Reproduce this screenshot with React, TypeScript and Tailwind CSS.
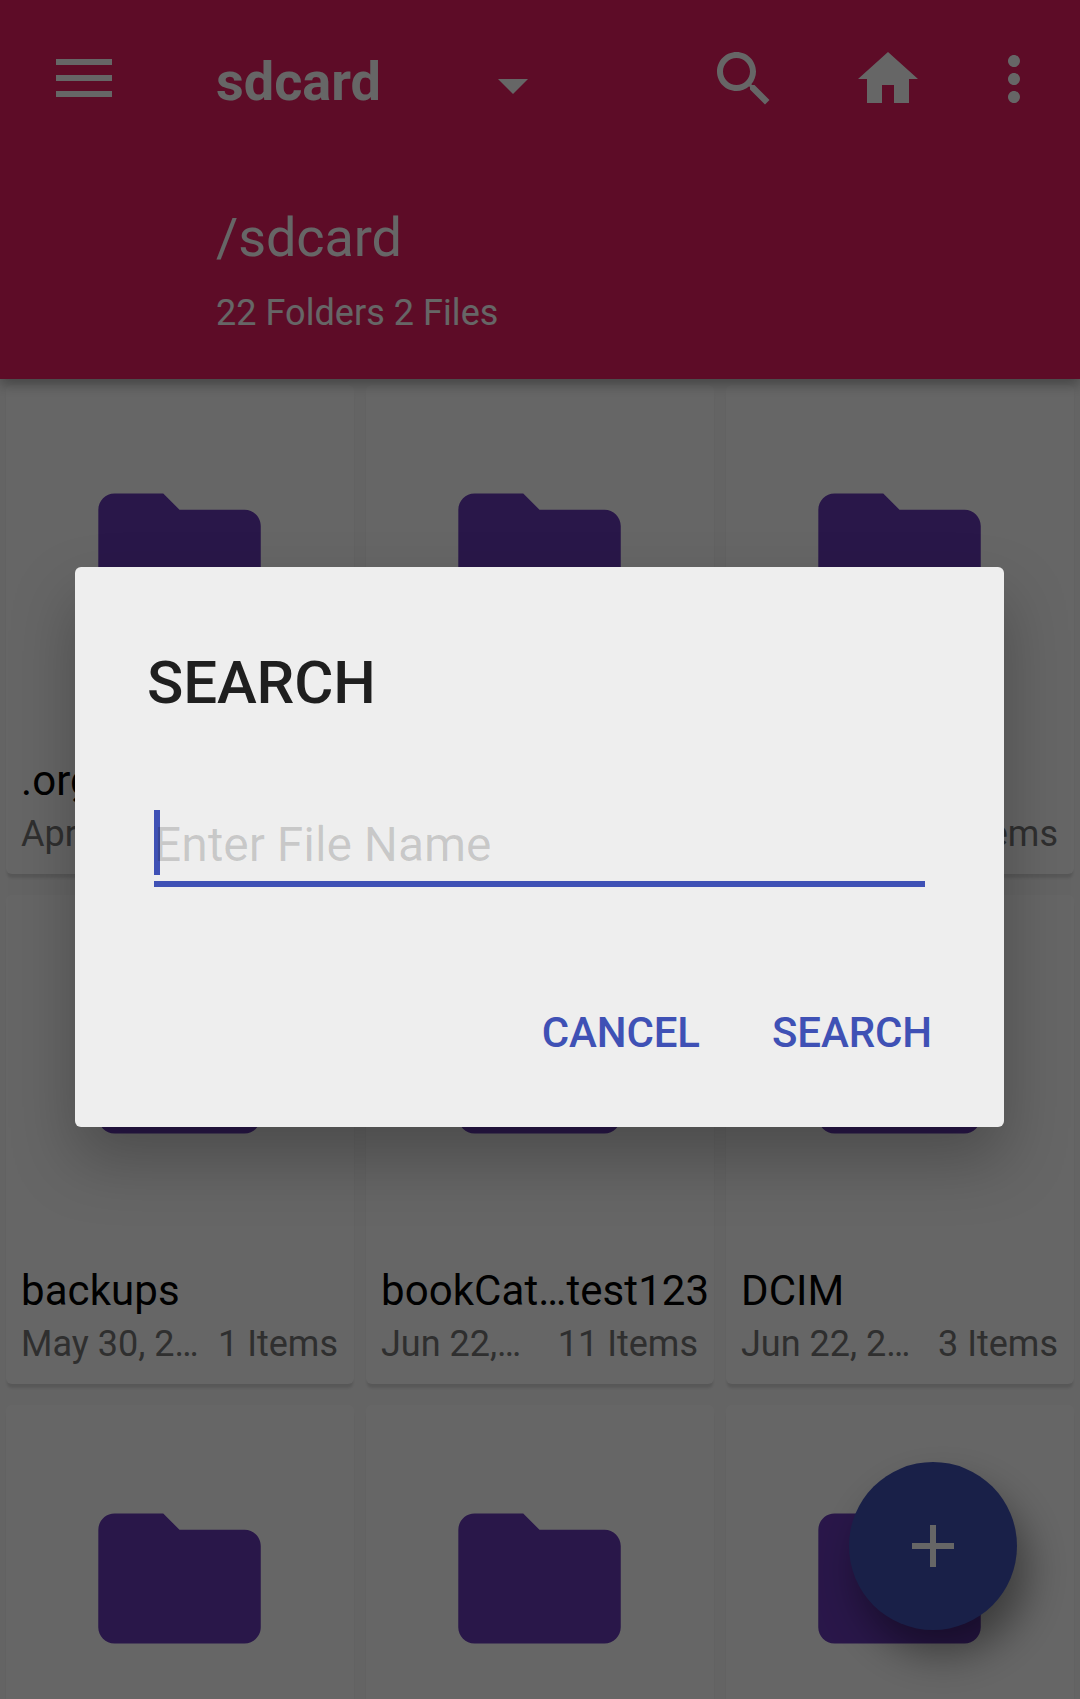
type Entry = { name: string; date: string; items: string };

const entries: Entry[] = [
  { name: ".org", date: "Apr", items: "Items" },
  { name: "", date: "", items: "" },
  { name: "", date: "", items: "Items" },
  { name: "backups", date: "May 30, 2…", items: "1 Items" },
  { name: "bookCat…test123", date: "Jun 22,…", items: "11 Items" },
  { name: "DCIM", date: "Jun 22, 2…", items: "3 Items" },
  { name: "", date: "", items: "" },
  { name: "", date: "", items: "" },
  { name: "", date: "", items: "" },
];

function Icon({ d, className }: { d: string; className: string }) {
  return (
    <svg viewBox="0 0 24 24" fill="currentColor" className={className}>
      <path d={d} />
    </svg>
  );
}

const SEARCH =
  "M15.5 14h-.79l-.28-.27C15.41 12.59 16 11.11 16 9.5 16 5.91 13.09 3 9.5 3S3 5.91 3 9.5 5.91 16 9.5 16c1.61 0 3.09-.59 4.23-1.57l.27.28v.79l5 4.99L20.49 19l-4.99-5zm-6 0C7.01 14 5 11.99 5 9.5S7.01 5 9.5 5 14 7.01 14 9.5 11.99 14 9.5 14z";
const HOME = "M10 20v-6h4v6h5v-8h3L12 3 2 12h3v8z";
const MORE =
  "M12 8c1.1 0 2-.9 2-2s-.9-2-2-2-2 .9-2 2 .9 2 2 2zm0 2c-1.1 0-2 .9-2 2s.9 2 2 2 2-.9 2-2-.9-2-2-2zm0 6c-1.1 0-2 .9-2 2s.9 2 2 2 2-.9 2-2-.9-2-2-2z";
const FOLDER =
  "M10 4H4c-1.1 0-1.99.9-1.99 2L2 18c0 1.1.9 2 2 2h16c1.1 0 2-.9 2-2V8c0-1.1-.9-2-2-2h-8l-2-2z";

function Header() {
  return (
    <header className="relative z-10 h-[379px] bg-[#e91e63] text-white shadow-[0_6px_12px_rgba(0,0,0,0.3)]">
      <div className="flex h-[158px] items-center pl-14 pr-[30px]">
        <button className="mb-0.5 flex w-14 flex-col gap-2.5">
          <span className="h-1.5 bg-white" />
          <span className="h-1.5 bg-white" />
          <span className="h-1.5 bg-white" />
        </button>
        <h1 className="ml-[104px] w-[282px] pt-1.5 text-[54px] font-bold leading-[64px]">sdcard</h1>
        <svg viewBox="0 0 30 15" fill="currentColor" className="mt-3.5 h-[15px] w-[30px]">
          <path d="M0 0h30L15 15z" />
        </svg>
        <Icon d={SEARCH} className="ml-auto size-[72px]" />
        <Icon d={HOME} className="ml-[72px] size-[72px]" />
        <Icon d={MORE} className="ml-[54px] size-[72px]" />
      </div>
      <div className="pl-[216px] pt-12">
        <p className="text-[54px] leading-[64px] tracking-[-0.1px]">/sdcard</p>
        <p className="mt-[22px] text-[36px] leading-[42px] tracking-[0.05px]">22 Folders 2 Files</p>
      </div>
    </header>
  );
}

function Card({ entry }: { entry: Entry }) {
  return (
    <article className="flex h-[489px] flex-col rounded-md bg-white pl-[15px] pr-4 pt-[76px] shadow-[0_5px_3px_-1px_rgba(0,0,0,0.13)]">
      <Icon d={FOLDER} className="mr-px size-[195px] shrink-0 self-center text-[#673ab7]" />
      <h2 className="mt-[100px] h-[50px] whitespace-nowrap text-[42px] leading-[50px] tracking-[0.08px] text-black">
        {entry.name}
      </h2>
      <div className="mt-[7px] flex justify-between whitespace-nowrap text-[36px] leading-[42px] text-[#757575]">
        <span>{entry.date}</span>
        <span>{entry.items}</span>
      </div>
    </article>
  );
}

function SearchDialog() {
  return (
    <div
      role="dialog"
      className="absolute left-[75px] top-[567px] flex h-[560px] w-[929px] flex-col rounded-md bg-[#eeeeee] pt-[81px] shadow-[0_32px_64px_rgba(0,0,0,0.26)]"
    >
      <h2 className="pl-[72px] text-[60px] font-medium leading-[70px] tracking-[-0.15px] text-[#1f1f1f]">SEARCH</h2>
      <div className="relative ml-[79px] mt-[92px] w-[771px] border-b-[6px] border-[#3f51b5] pb-px">
        <span className="absolute left-0 top-0 h-[65px] w-1.5 bg-[#3f51b5]" />
        <input
          readOnly
          placeholder="Enter File Name"
          className="relative block h-[70px] w-full bg-transparent text-[48px] leading-[70px] tracking-[-0.05px] outline-none placeholder:text-black/16"
        />
      </div>
      <div className="mt-[121px] flex justify-end gap-[72px] pr-[72px] text-[42px] font-medium leading-[50px] tracking-[-0.1px] text-[#3f51b5]">
        <button>CANCEL</button>
        <button>SEARCH</button>
      </div>
    </div>
  );
}

export default function App() {
  return (
    <div className="relative h-[1699px] w-[1080px] overflow-hidden bg-[#fafafa] font-[Roboto,sans-serif]">
      <Header />
      <main className="grid grid-cols-3 gap-x-3 gap-y-[21px] px-1.5 pt-1.5">
        {entries.map((entry, i) => (
          <Card key={i} entry={entry} />
        ))}
      </main>
      <button className="absolute left-[849px] top-[1462px] flex size-[168px] items-center justify-center rounded-full bg-[#3f51b5] text-white shadow-[10px_24px_42px_rgba(0,0,0,0.42)]">
        <svg viewBox="0 0 42 42" fill="currentColor" className="size-[42px]">
          <path d="M18 0h6v18h18v6H24v18h-6V24H0v-6h18z" />
        </svg>
      </button>
      <div className="absolute inset-0 z-20 bg-black/60">
        <SearchDialog />
      </div>
    </div>
  );
}
